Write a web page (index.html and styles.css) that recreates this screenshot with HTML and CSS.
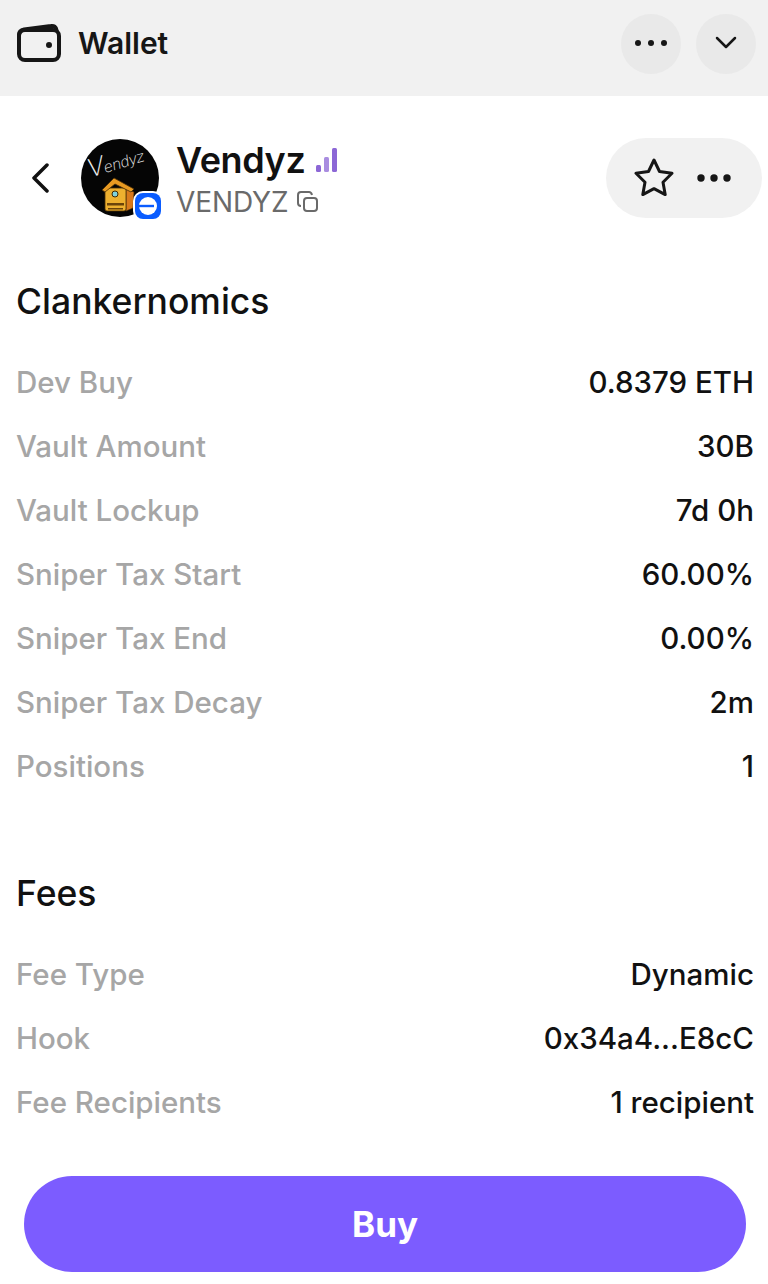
FILE: index.html
```html
<!DOCTYPE html>
<html lang="en">
<head>
  <meta charset="UTF-8" />
  <meta name="viewport" content="width=device-width, initial-scale=1" />
  <title>Vendyz – Wallet</title>
  <link rel="stylesheet" href="styles.css">
</head>
<body>

  <header class="topbar">
    <svg class="wallet-icon" width="46" height="44" viewBox="0 0 46 44" fill="none" stroke="#161616" stroke-width="4" stroke-linejoin="round" stroke-linecap="round">
      <path d="M3 14c0-3 2-5 5-5.500L35 5c3-.5 5 1 5.500 4"/>
      <rect x="3" y="9" width="40" height="30" rx="6"/>
      <circle cx="33" cy="24" r="2" fill="#161616" stroke-width="2"/>
    </svg>
    <span class="topbar-title">Wallet</span>
    <button class="round-btn push">
      <svg class="nudge" width="34" height="8" viewBox="0 0 34 8" fill="#161616"><circle cx="4" cy="4" r="3"/><circle cx="17" cy="4" r="3"/><circle cx="30" cy="4" r="3"/></svg>
    </button>
    <button class="round-btn">
      <svg class="nudge" width="22" height="14" viewBox="0 0 22 14" fill="none" stroke="#161616" stroke-width="2.500" stroke-linecap="round" stroke-linejoin="round"><path d="M2 2l9 9 9-9"/></svg>
    </button>
  </header>

  <section class="token">
    <svg class="back" width="20" height="30" viewBox="0 0 20 30" fill="none" stroke="#111" stroke-width="3.500" stroke-linecap="round" stroke-linejoin="round"><path d="M17 2L4 15l13 13"/></svg>

    <div class="avatar">
      <svg width="78" height="78" viewBox="0 0 78 78">
        <circle cx="39" cy="39" r="39" fill="#050505"/>
        <text class="scrawl" transform="translate(8 39) rotate(-17) skewX(-10)"><tspan class="scrawl-cap">V</tspan>endyz</text>
        <path d="M45 50l8 3-1 16-7 3z" fill="#d9791c" stroke="#4a2f06" stroke-width=".6"/>
        <rect x="24" y="49" width="21" height="23" rx="2" fill="#eeb02f" stroke="#4a2f06" stroke-width=".8"/>
        <path d="M33 39L21 51l3 2 10-8 16 8 3-3z" fill="#e89a22" stroke="#4a2f06" stroke-width=".8"/>
        <rect x="26" y="64" width="17" height="2.500" fill="#6b430a"/>
        <rect x="27" y="69" width="15" height="1.500" fill="#6b430a"/>
        <circle cx="34" cy="55" r="3" fill="#7fd2dc" stroke="#3d2a08"/>
      </svg>
      <span class="badge">
        <svg width="26" height="26" viewBox="0 0 26 26">
          <rect width="26" height="26" rx="8" fill="#0a5cff"/>
          <circle cx="13" cy="13" r="9" fill="#fff"/>
          <rect x="4" y="11.800" width="15" height="2.400" fill="#0a5cff"/>
        </svg>
      </span>
    </div>

    <div class="token-names">
      <div class="token-name">Vendyz
        <svg width="22" height="26" viewBox="0 0 22 26" fill="#8c67d6"><rect x="0" y="18" width="5" height="7" rx="1.500"/><rect x="8" y="10" width="5" height="15" rx="1.500" opacity=".75"/><rect x="16" y="1" width="5" height="24" rx="1.500"/></svg>
      </div>
      <div class="token-symbol">VENDYZ
        <svg width="22" height="22" viewBox="0 0 22 22" fill="none" stroke="#6a6a6a" stroke-width="2" stroke-linejoin="round"><rect x="7" y="7" width="13" height="13" rx="3"/><path d="M4 15c-1.500 0-3-1-3-3V4c0-2 1-3 3-3h8c1.500 0 2.500 1 3 3"/></svg>
      </div>
    </div>

    <div class="pill">
      <svg class="star" width="40" height="38" viewBox="0 0 40 38" fill="none" stroke="#161616" stroke-width="3" stroke-linejoin="round"><path d="M20 2l5.500 11.500L38 15.300l-9 8.900 2.200 12.400L20 30.700 8.800 36.600 11 24.200l-9-8.900 12.500-1.800z"/></svg>
      <svg width="34" height="8" viewBox="0 0 34 8" fill="#161616"><circle cx="4" cy="4" r="3.700"/><circle cx="17" cy="4" r="3.700"/><circle cx="30" cy="4" r="3.700"/></svg>
    </div>
  </section>

  <section class="info">
    <h2>Clankernomics</h2>
    <div class="row"><span class="label">Dev Buy</span><span class="value">0.8379 ETH</span></div>
    <div class="row"><span class="label">Vault Amount</span><span class="value">30B</span></div>
    <div class="row"><span class="label">Vault Lockup</span><span class="value">7d 0h</span></div>
    <div class="row"><span class="label">Sniper Tax Start</span><span class="value">60.00%</span></div>
    <div class="row"><span class="label">Sniper Tax End</span><span class="value">0.00%</span></div>
    <div class="row"><span class="label">Sniper Tax Decay</span><span class="value">2m</span></div>
    <div class="row"><span class="label">Positions</span><span class="value">1</span></div>
  </section>

  <section class="info fees">
    <h2>Fees</h2>
    <div class="row"><span class="label">Fee Type</span><span class="value">Dynamic</span></div>
    <div class="row"><span class="label">Hook</span><span class="value">0x34a4...E8cC</span></div>
    <div class="row"><span class="label">Fee Recipients</span><span class="value">1 recipient</span></div>
  </section>

  <div class="footer">
    <button class="buy-btn">Buy</button>
  </div>

</body>
</html>
```

FILE: styles.css
```css
html, body {
  margin: 0;
  padding: 0;
}

body {
  font-family: Inter, "Liberation Sans", sans-serif;
  background: #fff;
  color: #111;
  width: 768px;
  height: 1284px;
  overflow: hidden;
}

button {
  border: none;
  font-family: inherit;
  cursor: pointer;
}

.topbar {
  height: 96px;
  background: #f1f1f1;
  display: flex;
  align-items: center;
  padding: 0 12px 0 16px;
  box-sizing: border-box;
}

.wallet-icon {
  margin-right: 16px;
  margin-top: -10px;
}

.topbar-title {
  font-size: 30px;
  font-weight: 600;
  color: #161616;
  margin-top: -10px;
}

.round-btn {
  width: 60px;
  height: 60px;
  border-radius: 50%;
  background: #e9e9e9;
  display: flex;
  align-items: center;
  justify-content: center;
  margin-left: 15px;
  margin-top: -8px;
  padding: 0;
}

.nudge {
  margin-top: -2px;
}

.push {
  margin-left: auto;
}

.token {
  display: flex;
  align-items: center;
  height: 80px;
  margin-top: 42px;
  padding: 0 6px 0 30px;
}

.back {
  margin-right: 31px;
}

.avatar {
  position: relative;
  width: 78px;
  height: 78px;
  margin-right: 17px;
}

.scrawl {
  font-family: "DejaVu Sans", sans-serif;
  font-weight: 200;
  font-size: 15px;
  letter-spacing: -0.8px;
  fill: #eee;
}

.scrawl-cap {
  font-size: 25px;
}

.badge {
  position: absolute;
  right: -4px;
  bottom: -4px;
  width: 26px;
  height: 26px;
  border: 2px solid #fff;
  border-radius: 10px;
  background: #fff;
  display: block;
}

.token-names {
  padding-top: 2px;
}

.token-name {
  font-size: 36px;
  font-weight: 600;
  line-height: 42px;
  letter-spacing: -0.4px;
  display: flex;
  align-items: center;
  gap: 11px;
}

.token-symbol {
  font-size: 28px;
  line-height: 34px;
  margin-top: 4px;
  letter-spacing: -0.1px;
  color: #6a6a6a;
  display: flex;
  align-items: center;
  gap: 8px;
}

.pill {
  margin-left: auto;
  width: 156px;
  height: 80px;
  border-radius: 40px;
  background: #f1f1f1;
  display: flex;
  align-items: center;
  box-sizing: border-box;
  padding-left: 28px;
  gap: 23px;
}

.star {
  margin-top: -2px;
}

.info {
  padding: 0 14px 0 16px;
  margin-top: 60px;
}

.info h2 {
  font-size: 35.500px;
  font-weight: 500;
  line-height: 48px;
  margin: 0 0 24px;
  color: #111;
}

.fees {
  margin-top: 72px;
}

.row {
  height: 64px;
  display: flex;
  justify-content: space-between;
  align-items: center;
  font-size: 29.500px;
}

.label {
  color: #a6a6a6;
  font-weight: 500;
}

.value {
  color: #111;
  font-weight: 500;
}

.footer {
  padding: 0 22px 0 24px;
  margin-top: 42px;
}

.buy-btn {
  width: 100%;
  height: 96px;
  border-radius: 48px;
  background: #7c5cff;
  color: #fff;
  font-size: 35px;
  font-weight: 700;
}
```
